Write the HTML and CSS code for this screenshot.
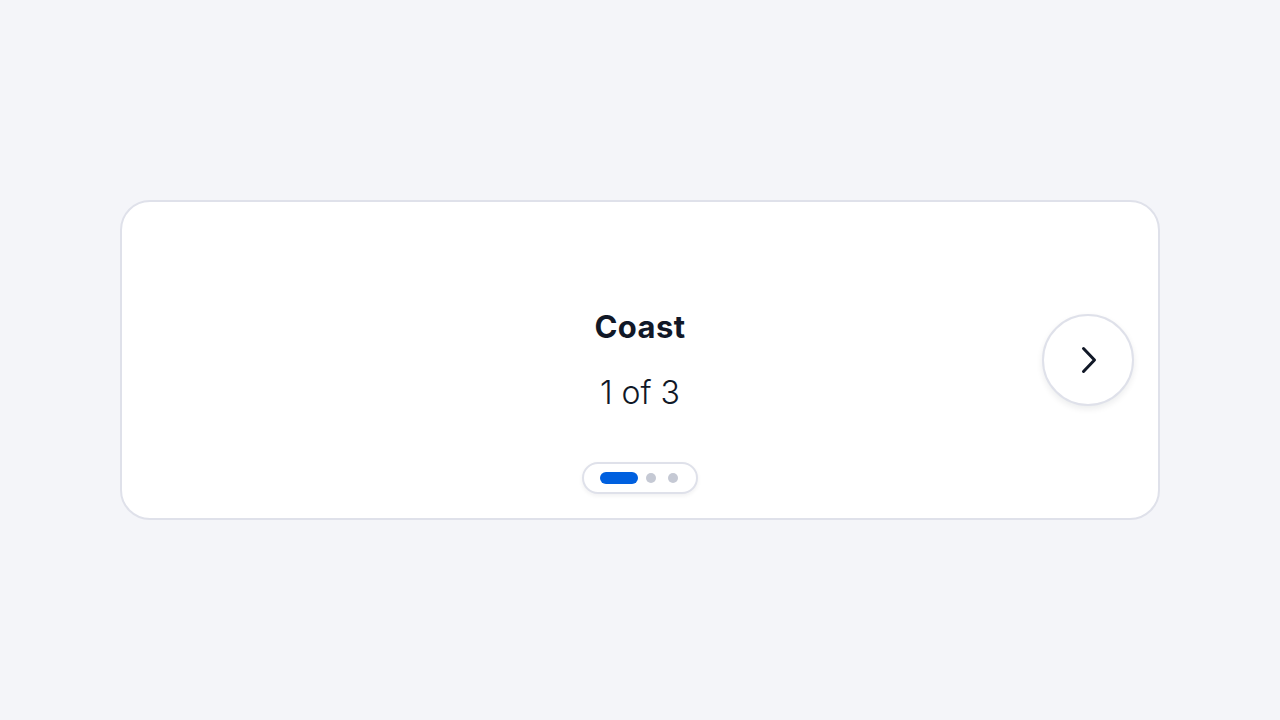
FILE: index.html
```html
<!DOCTYPE html>
<html lang="en">
<head>
<meta charset="utf-8">
<title>Carousel</title>
<link rel="stylesheet" href="styles.css">
</head>
<body>
<main class="page">
  <section class="card">
    <div class="slide">
      <h2 class="title">Coast</h2>
      <p class="count">1 of 3</p>
    </div>
    <button class="next" aria-label="Next">
      <svg width="20" height="30" viewBox="0 0 20 30" fill="none"><path d="M4.5 3.5 L15.5 15 L4.5 26.5" stroke="#111827" stroke-width="3" stroke-linecap="round" stroke-linejoin="round"/></svg>
    </button>
    <div class="dots">
      <span class="dot active"></span>
      <span class="dot"></span>
      <span class="dot"></span>
    </div>
  </section>
</main>
</body>
</html>
```
FILE: styles.css
```css
* { box-sizing: border-box; }
html, body { margin: 0; height: 100%; }
body {
  background: #f4f5f9;
  font-family: Inter, "Noto Sans", sans-serif;
  color: #111827;
}
.page {
  height: 720px;
  display: flex;
  align-items: center;
  justify-content: center;
}
.card {
  position: relative;
  width: 1040px;
  height: 320px;
  background: #fff;
  border: 2px solid #dfe1ea;
  border-radius: 30px;
  display: flex;
  align-items: center;
  justify-content: center;
}
.slide {
  text-align: center;
}
.title {
  margin: 0;
  font-size: 31px;
  font-weight: 700;
  line-height: 40px;
  letter-spacing: 0.4px;
}
.count {
  margin: 26px 0 0;
  font-size: 32px;
  font-weight: 300;
  line-height: 40px;
}
.next {
  position: absolute;
  right: 24px;
  top: 112px;
  width: 92px;
  height: 92px;
  border-radius: 50%;
  border: 2px solid #dfe1ea;
  background: #fff;
  box-shadow: 0 3px 6px rgba(17, 24, 39, 0.08);
  display: flex;
  align-items: center;
  justify-content: center;
  padding: 0;
}
.next svg { margin-left: 2px; }
.dots {
  position: absolute;
  left: 460px;
  top: 260px;
  height: 32px;
  padding: 0 18px 0 16px;
  border: 2px solid #dfe1ea;
  border-radius: 16px;
  background: #fff;
  box-shadow: 0 2px 4px rgba(17, 24, 39, 0.06);
  display: flex;
  align-items: center;
  gap: 12px;
}
.dot {
  width: 10px;
  height: 10px;
  border-radius: 50%;
  background: #c5c9d4;
}
.dot.active {
  width: 38px;
  height: 12px;
  border-radius: 6px;
  background: #0060df;
  margin-right: -4px;
}
```
